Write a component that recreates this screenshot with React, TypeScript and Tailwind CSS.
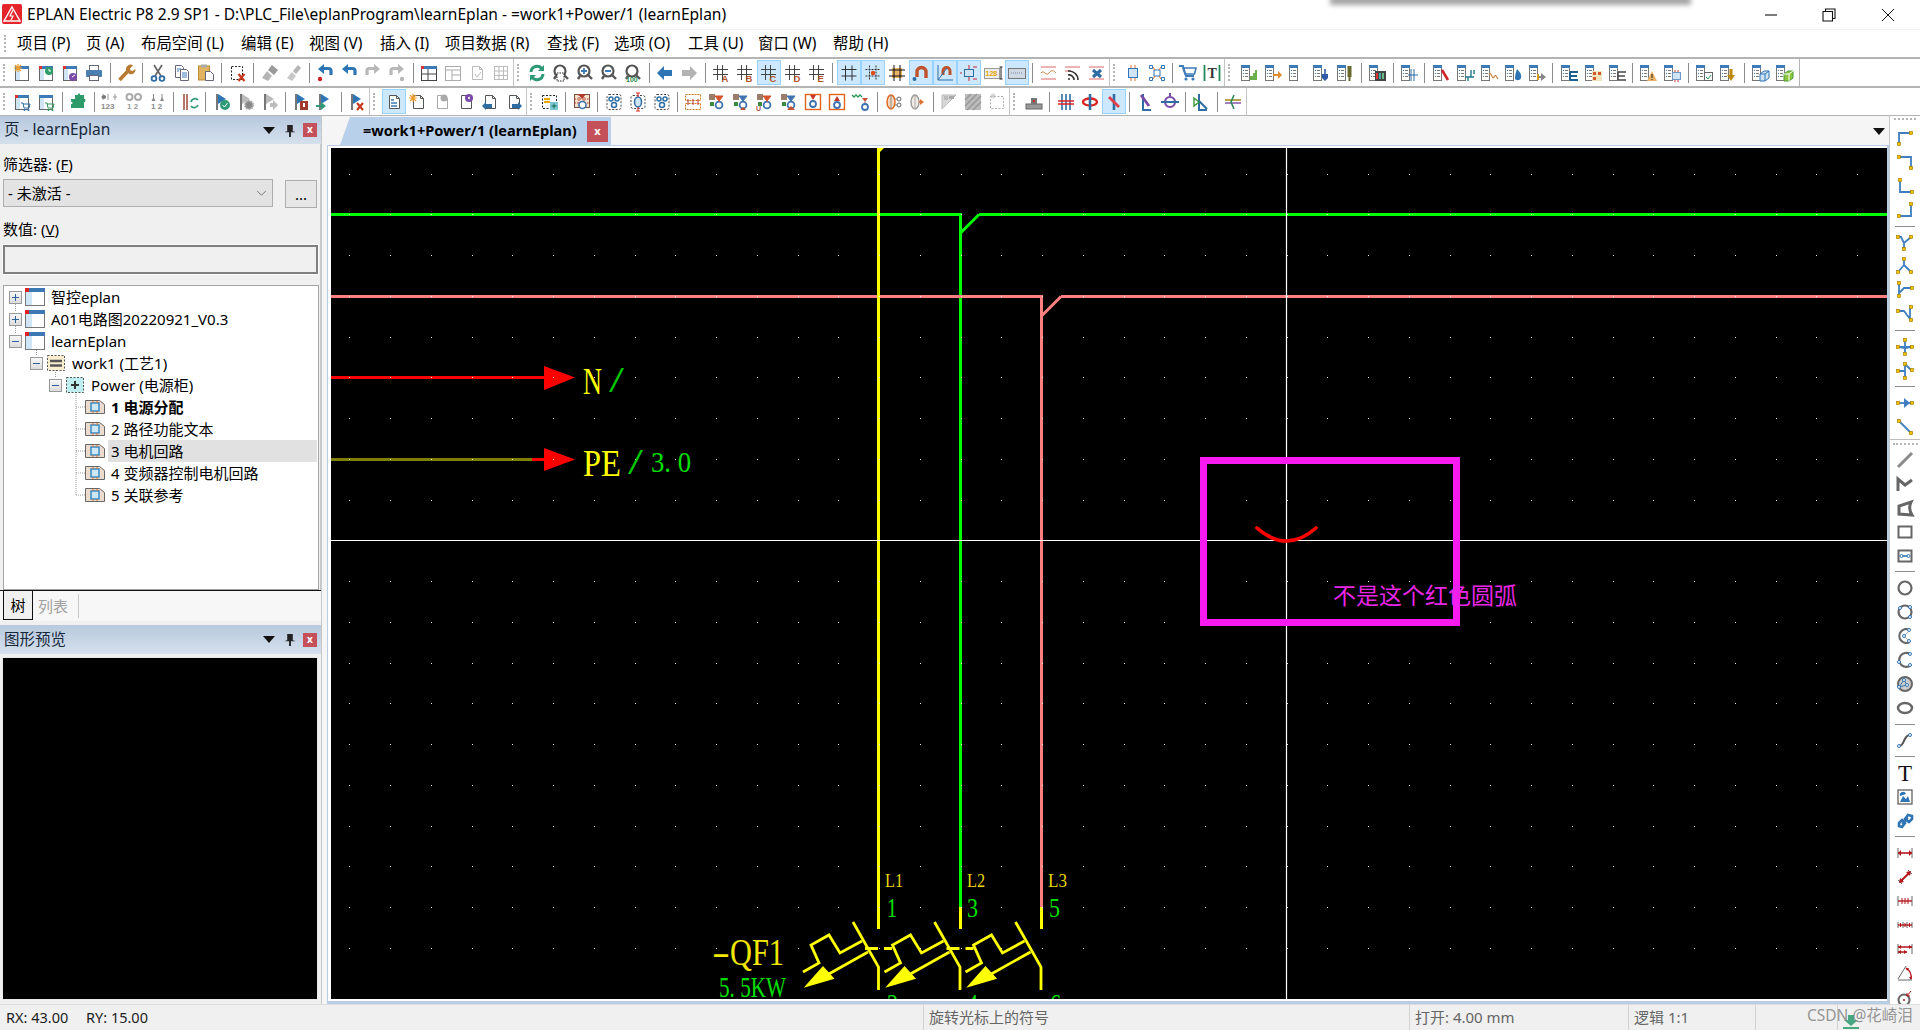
import React from 'react';

const BLUE = '#3d7ab8';
const GR = '#8a8a8a';

const win = (c: string, extra?: React.ReactNode) => (
  <>
    <rect x="3.5" y="4.5" width="13" height="13" fill="#fff" stroke="#666" />
    <rect x="3" y="3" width="14" height="3" fill={BLUE} />
    <rect x="3" y="3" width="3" height="3" fill={c} />
    <rect x="4" y="6" width="4" height="11" fill="#cfe4f5" />
    {extra}
  </>
);
const page = (extra?: React.ReactNode, c = '#666') => (
  <>
    <path d="M5.5 3.5h7l3 3v10h-10z" fill="#fff" stroke={c} />
    <path d="M12.5 3.5v3h3" fill="none" stroke={c} />
    {extra}
  </>
);
const star = (x: number, y: number) => (
  <path d={`M${x} ${y - 4}v8M${x - 4} ${y}h8M${x - 3} ${y - 3}l6 6M${x + 3} ${y - 3}l-6 6`} stroke="#f0a030" strokeWidth="1.2" />
);
const flag = (c: string, extra?: React.ReactNode) => (
  <>
    <path d="M5 2v16" stroke="#777" strokeWidth="2" />
    <path d="M6 2l8 5-8 5z" fill={c} />
    {extra}
  </>
);
const list = (glyph?: React.ReactNode) => (
  <>
    <rect x="2.5" y="2.5" width="8" height="15" fill="#fff" stroke="#777" />
    <rect x="2" y="2" width="9" height="3" fill={BLUE} />
    <path d="M4 7.5h1M4 10.5h1M4 13.5h1" stroke={BLUE} />
    <path d="M6 7.5h3M6 10.5h3M6 13.5h3" stroke="#777" />
    {glyph}
  </>
);
const grid = (letter?: string) => (
  <>
    <path d="M6.5 2v15M11.5 2v15M2 6.5h15M2 11.5h15" stroke="#444" />
    {letter && <text x="10.5" y="18.5" fontSize="9.5" fontWeight="700" fill="#b5532a" fontFamily="Liberation Sans, sans-serif">{letter}</text>}
  </>
);
const undo = (c: string, dot?: string) => (
  <>
    <path d="M16 12V8a2.5 2.5 0 0 0-2.5-2.5H8" stroke={c} strokeWidth="3.2" fill="none" />
    <path d="M9 1v10L3 6z" fill={c} />
    {dot && <circle cx="5" cy="16" r="2.2" fill={dot} />}
  </>
);
const redo = (c: string, dot?: string) => <g transform="translate(20 0) scale(-1 1)">{undo(c, dot)}</g>;
const lens = (extra?: React.ReactNode, c = '#555') => (
  <>
    <circle cx="9" cy="8" r="5.5" fill="#fff" stroke={c} strokeWidth="2.2" />
    <path d="M13 12l4 4M5 13l-2 3" stroke={c} strokeWidth="2.4" />
    {extra}
  </>
);
const sym = (top: string, extra?: React.ReactNode) => (
  <>
    <circle cx="12" cy="13" r="3.4" fill="none" stroke="#3f74b0" strokeWidth="1.8" />
    <path d="M12 10V4M8 4l4 5 4-5z" fill={top} stroke={top} />
    <rect x="2" y="2" width="6" height="6" fill="#9a7d6a" />
    <rect x="3" y="10" width="4" height="4" fill="#3a8a3f" />
    {extra}
  </>
);
const conn = (d: string, ends: number[][]) => (
  <>
    <path d={d} fill="none" stroke="#3f7fc0" strokeWidth="1.8" />
    {ends.map(([x, y]) => <rect key={`${x}-${y}`} x={x - 1.6} y={y - 1.6} width="3.2" height="3.2" fill="#f2c200" stroke="#a07800" strokeWidth="0.6" />)}
  </>
);
const dots = (pts: number[][]) => pts.map(([x, y]) => <circle key={`${x}-${y}`} cx={x} cy={y} r="1.5" fill="#fff" stroke="#2f74b5" strokeWidth="1" />);
const dim = (extra: React.ReactNode) => (
  <>
    <path d="M3 5v10M17 5v10" stroke="#666" />
    {extra}
  </>
);

const icons: Record<string, React.ReactNode> = {
  newProj: win(BLUE, star(6, 5)),
  openProj: win('#d33', <><circle cx="13" cy="8" r="4" fill="#2e9e6b" /><path d="M13 6v2h2" stroke="#fff" fill="none" /></>),
  closeProj: win('#d33', <><circle cx="13" cy="14" r="4" fill="#7a4aa8" /><path d="M12 14l3-2" stroke="#fff" /></>),
  print: <><rect x="5.5" y="2.5" width="9" height="5" fill="#fff" stroke="#667" /><rect x="2" y="7" width="16" height="7" rx="1" fill="#4a7fb0" /><rect x="5.5" y="12.5" width="9" height="5" fill="#fff" stroke="#667" /></>,
  wrench: <><path d="M3.5 17L12 8" stroke="#b87a30" strokeWidth="3.6" /><path d="M10 7a4.5 4.5 0 0 1 7-4.5l-3 3 .5 2 2 .5 3-2a4.5 4.5 0 0 1-6 5z" fill="#b87a30" /></>,
  cut: <><path d="M6 2l7 11M14 2L7 13" stroke="#666" strokeWidth="1.7" /><circle cx="6" cy="15.5" r="2.4" fill="none" stroke="#2e6da4" strokeWidth="1.8" /><circle cx="14" cy="15.5" r="2.4" fill="none" stroke="#2e6da4" strokeWidth="1.8" /></>,
  copy: <><path d="M3.5 2.5h6l2 2v10h-8z" fill="#fff" stroke="#667" /><path d="M8.5 6.5h6l2 2v9h-8z" fill="#fff" stroke="#667" /><path d="M5 6h4M5 8h2M10 10h5M10 12h5M10 14h5" stroke={BLUE} /></>,
  paste: <><rect x="2.5" y="3" width="11" height="14" fill="#e3b45f" stroke="#b98a3a" /><rect x="5" y="1.5" width="6" height="3" fill="#aaa" /><path d="M9.5 8.5h5l3 3v6h-8z" fill="#fff" stroke="#667" /></>,
  delSel: <><rect x="3.5" y="3.5" width="11" height="13" fill="none" stroke="#222" strokeDasharray="2 1.5" /><path d="M10.5 11l6 7M16.5 11l-6 7" stroke="#c8391f" strokeWidth="2.2" /></>,
  brush1: <><path d="M12 2l6 5-4 5-6-5z" fill="#9a9a9a" /><path d="M7 8l5 5-4 5-6-3z" fill="#b5b5b5" /></>,
  brush2: <><path d="M14 2l3 3-5 6-3-3z" fill="#b5b5b5" /><path d="M8 9l4 4-4 5-5-3z" fill="#c8c8c8" /></>,
  undoDot: undo('#2e75b6', '#c22'),
  undo: undo('#2e75b6'),
  redo: redo('#b8b8b8'),
  redoDot: redo('#b8b8b8', '#b8b8b8'),
  panes: <><rect x="2.5" y="3.5" width="15" height="14" fill="#fff" stroke="#444" /><rect x="2" y="3" width="16" height="3" fill={BLUE} /><rect x="2" y="3" width="3" height="3" fill="#d33" /><path d="M2 11h15M9 6v12" stroke="#444" /></>,
  panes2: <><rect x="2.5" y="3.5" width="15" height="14" fill="#fff" stroke="#aaa" /><path d="M2 7h15M9 7v11M9 12h8" stroke="#aaa" /></>,
  docChk: page(<path d="M8 11l2 3 4-5" stroke="#bbb" fill="none" />, '#bbb'),
  table: <><rect x="3.5" y="3.5" width="13" height="13" fill="#fff" stroke="#bbb" /><path d="M8 3.5v13M12.5 3.5v13M3.5 8h13M3.5 12.5h13" stroke="#bbb" /></>,

  refresh: <><path d="M4 9a6 6 0 0 1 11-3" stroke="#2e9a75" strokeWidth="3" fill="none" /><path d="M16 11a6 6 0 0 1-11 3" stroke="#2e9a75" strokeWidth="3" fill="none" /><path d="M17 2v6h-6zM3 18v-6h6z" fill="#2e9a75" /></>,
  zoomWin: lens(<rect x="6" y="10" width="7" height="8" fill="#fff" stroke="#222" strokeDasharray="1.5 1" />),
  zoomIn: lens(<path d="M6 8h6M9 5v6" stroke={BLUE} strokeWidth="1.8" />),
  zoomOut: lens(<path d="M6 8h6" stroke={BLUE} strokeWidth="2" />),
  zoom100: lens(<text x="3" y="19" fontSize="7" fontWeight="700" fill="#2a8f4a" fontFamily="Liberation Sans, sans-serif">100</text>),
  back: <path d="M2 10l7-7v4h8v6H9v4z" fill="#2e75b6" />,
  fwd: <path d="M18 10l-7-7v4H3v6h8v4z" fill="#b3b3b3" />,
  gA: grid('A'), gB: grid('B'), gC: grid('C'), gD: grid('D'), gE: grid('E'),
  g: <path d="M6.5 2.5v15M13 2.5v15M2.5 6.5h15M2.5 13h15" stroke="#333" />,
  gPt: <><path d="M6.5 2.5v15M13 2.5v15M2.5 6.5h15M2.5 13h15" stroke="#333" strokeDasharray="2 1" /><circle cx="10" cy="10" r="2.2" fill="#e04b12" /></>,
  box: <><rect x="5" y="5" width="10" height="10" fill="#eab366" /><path d="M7 2v16M13 2v16M2 7h16M2 13h16" stroke="#111" /></>,
  mag1: <><path d="M6 14V9a4.5 4.5 0 0 1 9 0v6" fill="none" stroke="#c0522a" strokeWidth="3.4" /><circle cx="3.5" cy="16" r="2" fill="#2e6da4" /></>,
  mag2: <><path d="M8 12V8a3.5 3.5 0 0 1 7 0v4" fill="none" stroke="#c0522a" strokeWidth="3" /><path d="M3 2v15h15M3 17l9-12" stroke="#2e6da4" fill="none" /></>,
  snap: <><rect x="5.5" y="6.5" width="9" height="7" fill="#cfe4f5" stroke="#2e6da4" /><path d="M10 2v4M10 14v4M14 4h4M14 16h4M3 10H1" stroke="#c23" fill="none" /></>,
  num: <><rect x="1.5" y="5.5" width="15" height="10" fill="#eee" stroke="#999" /><text x="2.5" y="13" fontSize="7" fontWeight="700" fill="#e3a400" fontFamily="Liberation Sans, sans-serif">128</text><path d="M18 4v12M16.5 4h3M16.5 16h3" stroke="#222" /></>,
  ruler: <><rect x="1.5" y="5.5" width="17" height="10" fill="#cfd9e6" stroke="#777" /><path d="M4 10h12" stroke="#789" strokeDasharray="1 1" /></>,
  lines1: <><path d="M2 4h15M2 16h15" stroke="#d66" /><path d="M2 10c3-4 5 4 8 0s5-2 7 0" stroke="#c98a4a" fill="none" /></>,
  lines2: <><path d="M2 4h15M2 8h6" stroke="#d66" /><path d="M5 16h2M5 12a5 5 0 0 1 6 5M5 8a9 9 0 0 1 10 9" stroke="#333" strokeWidth="1.6" fill="none" /></>,
  lines3: <><path d="M2 4h15M2 16h15" stroke="#d66" /><path d="M6 7l8 7M14 7l-8 7" stroke="#2e6da4" strokeWidth="3" /></>,
  chip: <><rect x="5.5" y="5.5" width="9" height="9" fill="#cfe4f5" stroke="#2e75b6" /><path d="M8 2v3M12 2v3M8 15v3M12 15v3" stroke="#e07030" /></>,
  net: <><rect x="7" y="7" width="6" height="6" fill="#fff" stroke="#2e75b6" /><path d="M4 4h2l2 3M16 4h-2l-2 3M4 16h2l2-3M16 16h-2l-2-3" stroke="#e07030" fill="none" /><path d="M2.5 2.5h3v3h-3zM14.5 2.5h3v3h-3zM2.5 14.5h3v3h-3zM14.5 14.5h3v3h-3z" fill="#fff" stroke="#2e75b6" /></>,
  cart: <><path d="M1 3h4l3 10h8" fill="none" stroke={BLUE} strokeWidth="1.8" /><path d="M5 5h13l-1.5 6H7z" fill="none" stroke={BLUE} strokeWidth="1.6" /><circle cx="8" cy="16" r="1.6" fill={BLUE} /><circle cx="15" cy="16" r="1.6" fill={BLUE} /></>,
  tBar: <><path d="M2.5 2v16M17.5 2v16" stroke="#1f8a5a" strokeWidth="1.8" /><text x="5.5" y="15" fontSize="14" fontWeight="700" fill="#333" fontFamily="Liberation Serif, serif">T</text></>,

  l1: list(<path d="M11 17v-4h3v-3h2v-3h2v10z" fill="#6ab04c" />),
  l2: list(<path d="M10 11h5V8l4 4-4 4v-3h-5z" fill="#e08a2e" />),
  l3: list(),
  l4: list(<><path d="M14 6v5" stroke="#2e5aa8" strokeWidth="1.6" /><path d="M11 11h6v4l-3 3-3-3z" fill="#2e5aa8" /></>),
  l5: list(<><rect x="12.5" y="3" width="4" height="11" fill="#6a6a2e" /><path d="M14.5 14v4" stroke="#6a6a2e" strokeWidth="2" /></>),
  l6: list(<><rect x="8" y="8" width="11" height="10" fill="#444" /><path d="M10 10v6" stroke="#d33" strokeWidth="2" /><path d="M13 10v6" stroke="#4aa" strokeWidth="2" /><path d="M16 10v6" stroke="#6b8" strokeWidth="2" /></>),
  l7: list(<path d="M12 6v12M15 6v12M9 12h10" stroke="#2e6da4" />),
  l8: list(<path d="M11 7l6 10" stroke="#d3232a" strokeWidth="2.6" />),
  l9: list(<path d="M10 14h9M13 14v4M16 7v7M19 7v4" stroke="#1f7a8a" strokeWidth="1.4" fill="none" />),
  l10: list(<path d="M10 12c2-6 3 6 5 2s2 0 4 2" stroke="#c98a4a" fill="none" strokeWidth="1.2" />),
  l11: list(<path d="M14 6c3 3 5 6 4 9s-6 3-6 0 1-6 2-9z" fill="#2e75b6" />),
  l12: list(<><path d="M10 14h6" stroke="#888" strokeWidth="2" /><path d="M14 10l5 4-5 4z" fill="#888" /><rect x="10" y="11" width="2" height="6" fill="#d4a017" /></>),
  l13: list(<path d="M11 9h8M11 9v8M11 13h7M11 17h8" stroke="#1f5f8f" strokeWidth="2" fill="none" />),
  l14: list(<><rect x="9" y="8" width="10" height="10" fill="#efe6c0" /><rect x="10" y="9" width="3" height="3" fill="#d2572a" /><rect x="15" y="9" width="3" height="3" fill="#d2572a" /><rect x="10" y="14" width="3" height="3" fill="#d2572a" /></>),
  l15: list(<path d="M11 9h8M11 9v8M11 13h7M11 17h8" stroke="#444" strokeWidth="1.4" fill="none" />),
  l16: list(<><path d="M14 8l5 10H9z" fill="#eab366" /><path d="M14 11v4M14 16v1" stroke="#222" /></>),
  l17: list(<><rect x="10.5" y="9.5" width="8" height="7" fill="#cfe4f5" stroke="#6f97c5" /><path d="M13 7v2M16 7v2M13 17v2M16 17v2" stroke="#c33" /></>),
  l18: list(<><rect x="10.5" y="9.5" width="8" height="8" fill="#fff" stroke="#666" /><path d="M12 14l2 2 3-4" stroke="#2a9a5a" fill="none" /></>),
  l19: list(<><path d="M13 6v7" stroke="#c08a10" strokeWidth="3" /><path d="M9 12h8l-4 6z" fill="#c08a10" /></>),
  l20: list(<><path d="M10 11l4-3h5v7l-4 3h-5z" fill="#cfe4f5" stroke="#2e75b6" /><path d="M10 11h5v7M15 11l4-3" stroke="#2e75b6" fill="none" /></>),
  l21: list(<><path d="M10 11l4-3h5v7l-4 3h-5z" fill="#8cc63f" stroke="#4a9a3a" /><path d="M10 11h5v7M15 11l4-3" stroke="#fff" fill="none" /></>),

  cartB: win('#d33', <><path d="M9 11h2l1 5h5l1-4h-7" stroke="#2e6da4" fill="none" /><circle cx="12.5" cy="18" r="1" fill="#2e6da4" /><circle cx="16.5" cy="18" r="1" fill="#2e6da4" /></>),
  cartG: win(BLUE, <><path d="M9 11h2l1 5h5l1-4h-7" stroke="#2a9a5a" fill="none" /><circle cx="12.5" cy="18" r="1" fill="#2a9a5a" /><circle cx="16.5" cy="18" r="1" fill="#2a9a5a" /></>),
  puzzle: <path d="M7 3h3c-1-2 3-2 2 0h4v4c2-1 2 4 0 3v6H3v-4c2 1 2-3 0-2V7h4z" fill="#2f9a6a" />,
  t123: <><path d="M3 2v6M8 2v6M15 2v6M1 5h4M13 5h4" stroke="#999" /><circle cx="4" cy="5" r="2" fill="#777" /><text x="1" y="17" fontSize="8" fontWeight="700" fill="#888" fontFamily="Liberation Sans, sans-serif">123</text></>,
  t12a: <><circle cx="5.5" cy="5" r="3" fill="none" stroke="#aaa" strokeWidth="2" /><circle cx="14" cy="5" r="3" fill="none" stroke="#aaa" strokeWidth="2" /><text x="3" y="17" fontSize="8" fontWeight="700" fill="#999" fontFamily="Liberation Sans, sans-serif">1 2</text></>,
  t12b: <><path d="M5.5 2v4M14 2v4" stroke="#888" /><path d="M3.5 9l2-4 2 4zM12 9l2-4 2 4z" fill="#888" /><text x="3" y="17" fontSize="8" fontWeight="700" fill="#888" fontFamily="Liberation Sans, sans-serif">1 2</text></>,
  barRef: <><path d="M4 2v16M7 2v16" stroke="#a4574a" strokeWidth="1.6" /><path d="M11 10a4 4 0 0 1 7-2M18 13a4 4 0 0 1-7 1" stroke="#2e9a75" strokeWidth="1.8" fill="none" /></>,
  flagChk: flag('#2e75b6', <><circle cx="13" cy="13" r="5" fill="#2e9a75" /><path d="M10.5 13l2 2 3-4" stroke="#fff" fill="none" /></>),
  flagGear: flag('#bbb', <circle cx="13" cy="13" r="4" fill="#888" stroke="#aaa" strokeDasharray="1.5 1" strokeWidth="2" />),
  flagArr: flag('#bbb', <path d="M10 11v4h3v3l5-5-5-5v3z" fill="#bbb" />),
  flagDoc: flag('#2e75b6', <><rect x="9" y="9" width="8" height="9" fill="#a33a2e" /><rect x="12" y="11" width="2" height="4" fill="#fff" /></>),
  flagGrn: flag('#2e75b6', <path d="M1 13h5v-3l5 4-5 4v-3H1z" fill="#2e9a75" />),
  flagX: flag('#2e75b6', <path d="M10 11l6 7M16 11l-6 7" stroke="#c8391f" strokeWidth="2.2" />),
  docList: page(<path d="M7 8h3M7 11h6M7 14h6" stroke={BLUE} strokeWidth="1.5" />, '#555'),
  docStar: <>{page(undefined, '#555')}{star(5, 6)}</>,
  docCirc: page(<circle cx="12" cy="6" r="3.5" fill="#aaa" />, '#aaa'),
  docPur: page(<><circle cx="13" cy="6" r="4" fill="#7a4aa8" /><path d="M14 5l-2 1 2 1" stroke="#fff" fill="none" /></>, '#555'),
  docL: page(<path d="M2 14l4-4v2h6v4H6v2z" fill="#2e6da4" />, '#555'),
  docR: page(<path d="M18 14l-4-4v2H8v4h6v2z" fill="#2e6da4" />, '#555'),
  dashPlus: <><rect x="2.5" y="3.5" width="14" height="13" fill="none" stroke="#222" strokeDasharray="2 1.5" /><rect x="4" y="6" width="6" height="2" fill="#e6a800" /><rect x="4" y="9" width="6" height="2" fill="#e6a800" /><rect x="10" y="10" width="8" height="8" fill="#7cc7d4" /><path d="M14 11.5v5M11.5 14h5" stroke="#164" /></>,
  gridC: <><rect x="2.5" y="2.5" width="15" height="13" fill="#f4e2cf" stroke="#7a4a3a" /><path d="M7 2.5v13M12 2.5v13M2.5 7h15M2.5 11h15" stroke="#b03a2e" strokeDasharray="1.5 1" /><path d="M6 2l4 5 4-5z" fill="#b03a2e" /><circle cx="10.5" cy="13" r="3.5" fill="#fff" stroke="#3f74b0" strokeWidth="1.6" /></>,
  dashB: <><rect x="3" y="2.5" width="14" height="15" rx="2" fill="none" stroke="#444" strokeDasharray="2 1.5" /><circle cx="7" cy="7" r="2" fill="none" stroke="#2e6da4" strokeWidth="1.5" /><circle cx="13" cy="7" r="2" fill="none" stroke="#2e6da4" strokeWidth="1.5" /><circle cx="10" cy="13" r="2.5" fill="none" stroke="#2e6da4" strokeWidth="1.5" /></>,
  dashR: <><rect x="3" y="3.5" width="14" height="13" rx="2" fill="none" stroke="#444" strokeDasharray="2 1.5" /><ellipse cx="10" cy="10" rx="3.5" ry="5" fill="#cfe4f5" stroke="#2e6da4" strokeWidth="1.5" /><path d="M10 1v4M10 15v4M8 1h4M8 19h4" stroke="#d22" /></>,
  dashO: <><rect x="2.5" y="2.5" width="15" height="6" fill="none" stroke="#c8791a" strokeDasharray="2 1" /><rect x="2.5" y="11.5" width="15" height="6" fill="none" stroke="#c8791a" strokeDasharray="2 1" /><path d="M5 7v6M10 7v6M15 7v6" stroke="#b33" /></>,
  s1: sym('#d9502c'), s2: sym('#3f74b0', <path d="M9 18l3-3 3 3z" fill="#c8502c" />),
  s3: sym('#d9502c', <text x="1" y="19" fontSize="7" fontWeight="700" fill="#a4574a" fontFamily="Liberation Sans, sans-serif">U</text>),
  s4: sym('#3f74b0', <path d="M8 18l4-4 4 4z" fill="#c8502c" />),
  o1: <><rect x="2.5" y="2.5" width="15" height="15" fill="#fff" stroke="#e0631a" strokeWidth="1.4" /><path d="M7 3l3 5 3-5z" fill="#c8392b" /><circle cx="10" cy="12" r="3" fill="none" stroke="#3f74b0" strokeWidth="1.8" /></>,
  o2: <><rect x="2.5" y="2.5" width="15" height="15" fill="#fff" stroke="#e0631a" strokeWidth="1.4" /><path d="M7 9l3-5 3 5z" fill="#c8392b" /><circle cx="10" cy="13" r="3" fill="none" stroke="#3f74b0" strokeWidth="1.8" /></>,
  greenT: <><path d="M1 3l2 2 2-2 2 2 2-2 2 2" stroke="#2a9a5a" fill="none" strokeWidth="1.4" /><path d="M11 6h6l-3 4z" fill="#c8502c" /><path d="M14 10v2" stroke="#555" /><circle cx="14" cy="15" r="3" fill="none" stroke="#3f74b0" strokeWidth="1.8" /></>,
  caps: <><ellipse cx="8" cy="10" rx="4" ry="7" fill="#f5d7c0" stroke="#e0631a" strokeWidth="1.4" /><path d="M8 3v14" stroke="#888" /><path d="M12 7h3M12 13h3" stroke="#888" /><circle cx="16" cy="7" r="2" fill="#fff" stroke="#666" /><circle cx="16" cy="13" r="2" fill="#fff" stroke="#666" /></>,
  capsG: <><ellipse cx="8" cy="10" rx="4" ry="7" fill="#f3ece6" stroke="#999" strokeWidth="1.4" /><path d="M8 3v14" stroke="#aaa" /><path d="M12 10h3" stroke="#e07030" strokeWidth="1.6" /><path d="M13 7l4 3-4 3z" fill="#e07030" /></>,
  cube1: <><path d="M3 3h14L3 17z" fill="#d8d8d8" stroke="#bbb" /><rect x="10" y="4" width="5" height="3" fill="#aaa" /><rect x="5" y="4" width="4" height="4" fill="#bbb" /></>,
  hatch: <><rect x="2" y="2" width="16" height="16" fill="#bbb" /><path d="M2 8l6-6M2 14L14 2M4 18L18 4M10 18l8-8" stroke="#999" strokeWidth="1.5" /></>,
  dashS: <><rect x="3.5" y="4.5" width="13" height="12" fill="none" stroke="#aaa" strokeDasharray="2 1.5" /><path d="M6 1v6M3 4h6M4 2l4 4M8 2L4 6" stroke="#ccc" /></>,
  stamp: <><rect x="2" y="12" width="16" height="5" fill="#999" stroke="#666" /><rect x="7" y="6" width="6" height="6" fill="#777" /><circle cx="10" cy="9" r="1.2" fill="#c33" /></>,
  bus: <><path d="M6 2v16M10 2v16M14 2v16" stroke="#2e6da4" strokeWidth="1.6" /><path d="M2 9h16M2 12h16" stroke="#d22" strokeWidth="1.6" /></>,
  loop: <><ellipse cx="10" cy="10" rx="7" ry="3.5" fill="none" stroke="#d22" strokeWidth="2.4" /><path d="M10 2v16" stroke="#2e6da4" strokeWidth="2.6" /></>,
  slash: <><path d="M10 2v16" stroke="#2e6da4" strokeWidth="2.6" /><path d="M5 5l10 10" stroke="#e0404a" strokeWidth="2.8" /></>,
  bendP: <><path d="M7 2v16h8" stroke="#2e6da4" strokeWidth="2" fill="none" /><path d="M5 3l8 11" stroke="#7a4aa8" strokeWidth="2.8" /></>,
  ringP: <><circle cx="10" cy="10" r="5" fill="none" stroke="#7a4aa8" strokeWidth="2.2" /><path d="M1 10h18" stroke="#2e6da4" strokeWidth="2" /><path d="M10 1v3" stroke="#7a4aa8" strokeWidth="2" /></>,
  angG: <><path d="M8 2v16h8M8 9l8 8" stroke="#2e6da4" strokeWidth="2" fill="none" /><path d="M3 6l5 4-5 4z" fill="none" stroke="#3a9a3a" strokeWidth="1.4" /></>,
  multi: <><path d="M2 8h16" stroke="#a89020" strokeWidth="1.6" /><path d="M2 11h16" stroke="#7a4aa8" strokeWidth="1.4" /><path d="M11 3l-3 7 3 7" stroke="#2e8a5a" strokeWidth="1.6" fill="none" /></>,

  r1: conn('M4 16V5H16', [[4, 16], [16, 5]]),
  r2: conn('M4 5H16V16', [[4, 5], [16, 16]]),
  r3: conn('M5 4V16H17', [[5, 4], [17, 16]]),
  r4: conn('M16 4V16H4', [[16, 4], [4, 16]]),
  r5: conn('M3 5H6L9 11L16 5M9 11V17', [[3, 5], [16, 5], [9, 17]]),
  r6: conn('M9 3V9L3 16M9 9L16 16', [[9, 3], [3, 16], [16, 16]]),
  r7: conn('M4 3V15M4 13L9 8H17', [[4, 3], [4, 16], [17, 8]]),
  r8: conn('M3 7H9L15 15M15 3V15', [[3, 7], [16, 3], [16, 16]]),
  r9: conn('M10 3V11M3 10H16M10 11L4 10M10 11L16 10M10 11V17', [[10, 3], [3, 10], [17, 10], [10, 17]]),
  r10: conn('M10 3V10L3 10M10 3L16 9M10 10V17', [[10, 3], [3, 10], [17, 9], [10, 17]]),
  r11: <>{conn('M3 10H17', [[3, 10], [17, 10]])}<path d="M9 5l6 5-6 5z" fill="#3f7fc0" /></>,
  r12: <>{conn('M3 3L17 17', [[4, 4], [16, 16]])}</>,
  d1: <path d="M3 17L17 3" stroke={GR} strokeWidth="3" />,
  d2: <path d="M3 17V5l7 6 7-5" stroke="#666" strokeWidth="3" fill="none" />,
  d3: <path d="M4 16V8l12-4c-2 4-2 8 1 13z" stroke="#666" strokeWidth="3" fill="none" />,
  d4: <rect x="3.5" y="4.5" width="13" height="11" fill="none" stroke="#666" strokeWidth="2" />,
  d5: <><rect x="3.5" y="4.5" width="13" height="11" fill="none" stroke="#666" strokeWidth="2" /><path d="M6 10h8" stroke="#2f74b5" strokeWidth="1.6" />{dots([[6.5, 10], [13.5, 10]])}</>,
  c1: <circle cx="10" cy="10" r="6.5" fill="none" stroke="#666" strokeWidth="2.2" />,
  c2: <><circle cx="10" cy="10" r="6.5" fill="none" stroke="#666" strokeWidth="2.2" />{dots([[5, 6], [15, 5], [15, 15]])}</>,
  c3: <><path d="M15 4A7 7 0 1 0 15 16" fill="none" stroke="#666" strokeWidth="2.2" /><path d="M15 4l-6 6 6 6" fill="none" stroke="#aaa" />{dots([[14, 4], [9, 10], [14, 15]])}</>,
  c4: <><path d="M15 4A7 7 0 1 0 16 15" fill="none" stroke="#666" strokeWidth="2.2" />{dots([[15, 4], [4, 12], [15, 15]])}</>,
  c5: <><circle cx="10" cy="10" r="7" fill="#ccc" stroke="#666" strokeWidth="2" /><path d="M4 13l5-7 3 5z" fill="none" stroke="#2f74b5" />{dots([[4, 13], [9, 6], [12, 11]])}</>,
  c6: <ellipse cx="10" cy="10" rx="7" ry="5" fill="none" stroke="#666" strokeWidth="2.4" />,
  spl: <><path d="M4 16c6 0 4-11 11-11" fill="none" stroke="#555" strokeWidth="2" />{dots([[4, 16], [15, 5]])}</>,
  txt: <text x="10" y="18" textAnchor="middle" fontSize="23" fontFamily="Liberation Serif, serif" fill="#111">T</text>,
  pic: <><rect x="3" y="3" width="14" height="14" fill="#fff" stroke="#555" strokeWidth="1.2" /><path d="M5 15l3-6 3 3 2-3 2 6z" fill="#2f74b5" /><path d="M5 9a3 3 0 0 1 6-2z" fill="#2f74b5" /></>,
  link: <><path d="M4 12l3-3 3 3-3 4-3-1zM10 8l3-4 4 1 0 3-3 3z" fill="none" stroke="#2f74b5" strokeWidth="2.6" /><path d="M7 13l6-6" stroke="#2f74b5" strokeWidth="2" /></>,
  m1: dim(<><path d="M3 10h14" stroke="#b3151b" strokeWidth="1.6" /><path d="M3 10l3-3v6zM17 10l-3-3v6z" fill="#b3151b" /></>),
  m2: <><path d="M5 15L15 5" stroke="#b3151b" strokeWidth="2" /><path d="M3 13l4 4M13 3l4 4" stroke="#666" /><path d="M4 16l1-5 4 4zM16 4l-1 5-4-4z" fill="#b3151b" /></>,
  m3: dim(<><path d="M3 10h14" stroke="#b3151b" strokeWidth="1.4" /><path d="M7 7v6M10 7v6M13 7v6" stroke="#b3151b" /></>),
  m4: <><path d="M3 7v6M8 7v6M12 7v6M17 7v6" stroke="#666" /><path d="M3 10h14" stroke="#b3151b" strokeWidth="1.4" /><path d="M5.5 8v4M10 8v4M14.5 8v4" stroke="#b3151b" /></>,
  m5: dim(<><path d="M3 8h14M3 13h9" stroke="#b3151b" strokeWidth="1.4" /><path d="M3 8l3-2v4zM17 8l-3-2v4zM3 13l3-2v4zM12 13l-3-2v4z" fill="#b3151b" /></>),
  m6: <><path d="M3 16L11 3M3 17h14" stroke="#666" /><path d="M11 5a11 11 0 0 1 5 11" stroke="#b3151b" fill="none" strokeWidth="1.4" /><path d="M11 5l3 0-2 3zM16 17l-2-3 3 0z" fill="#b3151b" /></>,
  m7: <><circle cx="9" cy="13" r="5.5" fill="none" stroke="#666" strokeWidth="2" /><circle cx="9" cy="13" r="1" fill="#b3151b" /><path d="M16 4l-4 5M12 6v3h3" stroke="#b3151b" fill="none" /></>,
};

const Sep = () => <div className="w-[7.8px] h-full shrink-0 flex justify-center items-center"><div className="w-[1px] h-[20px] bg-[#8c8c8c]" /></div>;

const Btn = ({ name }: { name: string }) => {
  const on = name.startsWith('*');
  const key = on ? name.slice(1) : name;
  return (
    <div className={`w-[24px] h-[25px] shrink-0 flex items-center justify-center ${on ? 'bg-[#cce8ff] border border-[#99d1ff]' : ''}`}>
      <svg viewBox="0 0 20 20" className="w-[20px] h-[20px] shrink-0">{icons[key]}</svg>
    </div>
  );
};

const HGrip = ({ cls }: { cls: string }) => (
  <div className={`absolute top-[5px] bottom-[5px] w-[1px] border-l-2 border-dotted border-[#b5b5b5] ${cls}`} />
);

const Group = ({ pad, last, items }: { pad: string; last?: boolean; items: string[] }) => (
  <div className={`relative flex items-center h-full ${pad} ${last ? '' : 'border-r border-[#c4c4c4]'}`}>
    <HGrip cls="left-[3px]" />
    {items.map((it, i) => (it === '|' ? <Sep key={i} /> : <Btn key={i} name={it} />))}
  </div>
);

const row1 = [
  { pad: 'pl-[10.4px]', items: ['newProj', 'openProj', 'closeProj', 'print', '|', 'wrench', '|', 'cut', 'copy', 'paste', '|', 'delSel', '|', 'brush1', 'brush2', '|', 'undoDot', 'undo', 'redo', 'redoDot', '|', 'panes', 'panes2', 'docChk', 'table'] },
  { pad: 'pl-[11.3px]', items: ['refresh', 'zoomWin', 'zoomIn', 'zoomOut', 'zoom100', '|', 'back', 'fwd', '|', 'gA', 'gB', '*gC', 'gD', 'gE', '|', '*g', '*gPt', 'box', '*mag1', '*mag2', '*snap', 'num', '*ruler', '|', 'lines1', 'lines2', 'lines3'] },
  { pad: 'pl-[11px]', items: ['chip', 'net', '|', 'cart', 'tBar'] },
  { pad: 'pl-[12px]', last: true, items: ['l1', 'l2', 'l3', 'l4', 'l5', '|', 'l6', '|', 'l7', '|', 'l8', 'l9', 'l10', 'l11', 'l12', '|', 'l13', 'l14', 'l15', '|', 'l16', 'l17', '|', 'l18', 'l19', '|', 'l20', 'l21'] },
];

const row2 = [
  { pad: 'pl-[10.4px]', items: ['cartB', 'cartG', '|', 'puzzle', '|', 't123', 't12a', 't12b', '|', 'barRef', '|', 'flagChk', 'flagGear', 'flagArr', '|', 'flagDoc', 'flagGrn', '|', 'flagX'] },
  { pad: 'pl-[11.8px]', items: ['*docList', 'docStar', 'docCirc', 'docPur', 'docL', 'docR'] },
  { pad: 'pl-[11px]', items: ['dashPlus', '|', 'gridC', '|', 'dashB', 'dashR', 'dashB', '|', 'dashO', 's1', 's2', 's3', 's4', 'o1', 'o2', 'greenT', '|', 'caps', 'capsG', '|', 'cube1', 'hatch', 'dashS'] },
  { pad: 'pl-[12px]', last: true, items: ['stamp', '|', 'bus', 'loop', '*slash', '|', 'bendP', 'ringP', '|', 'angG', '|', 'multi'] },
];

const side = ['r1', 'r2', 'r3', 'r4', '|', 'r5', 'r6', 'r7', 'r8', '|', 'r9', 'r10', '|', 'r11', 'r12', '=', 'd1', 'd2', 'd3', 'd4', 'd5', '|', 'c1', 'c2', 'c3', 'c4', 'c5', 'c6', '|', 'spl', '|', 'txt', 'pic', 'link', '|', 'm1', 'm2', 'm3', 'm4', 'm5', 'm6', 'm7'];

const menus: [string, string][] = [
  ['项目 (P)', 'w-[69px]'], ['页 (A)', 'w-[55px]'], ['布局空间 (L)', 'w-[100px]'], ['编辑 (E)', 'w-[68px]'],
  ['视图 (V)', 'w-[71px]'], ['插入 (I)', 'w-[65px]'], ['项目数据 (R)', 'w-[102px]'], ['查找 (F)', 'w-[67px]'],
  ['选项 (O)', 'w-[74px]'], ['工具 (U)', 'w-[70px]'], ['窗口 (W)', 'w-[75px]'], ['帮助 (H)', 'w-[70px]'],
];

const PanelHeader = ({ title, h }: { title: string; h: string }) => (
  <div className={`${h} shrink-0 flex items-center pl-[4px] bg-gradient-to-b from-[#b7c9de] to-[#d5e0ec] text-[15.5px] text-[#16273a]`}>
    <span className="flex-1">{title}</span>
    <svg viewBox="0 0 14 8" className="w-[12px] h-[7px] mr-[10px]"><path d="M0 0h14L7 8z" fill="#111" /></svg>
    <svg viewBox="0 0 10 14" className="w-[10px] h-[13px] mr-[8px]"><path d="M2 1h6v7h2v1H6v5H4V9H0V8h2z" fill="#222" /></svg>
    <div className="w-[14px] h-[14px] mr-[4px] bg-[#c4515a] text-white text-[10px] font-bold leading-[13px] text-center">x</div>
  </div>
);

const TreeIcon = ({ kind }: { kind: string }) => {
  if (kind === 'proj') return (
    <svg viewBox="0 0 20 20" className="w-[20px] h-[20px] shrink-0">
      <rect x="0.5" y="2.5" width="19" height="16" fill="#fff" stroke="#777" />
      <rect x="0" y="1" width="20" height="4" fill="#3d78b5" />
      <rect x="0" y="1" width="4" height="4" fill="#d22" />
      <rect x="1" y="5" width="6" height="13" fill="#cfe6f7" />
    </svg>
  );
  if (kind === 'work') return (
    <svg viewBox="0 0 20 20" className="w-[20px] h-[20px] shrink-0">
      <rect x="1.5" y="2.5" width="17" height="15" fill="#fbeecf" stroke="#555" strokeDasharray="2 1.5" />
      <path d="M4 8h12M4 12.5h12" stroke="#555" strokeWidth="2.6" />
    </svg>
  );
  if (kind === 'pow') return (
    <svg viewBox="0 0 20 20" className="w-[20px] h-[20px] shrink-0">
      <rect x="1.5" y="2.5" width="17" height="15" fill="#bfeef0" stroke="#555" strokeDasharray="2 1.5" />
      <path d="M10 6v8M6 10h8" stroke="#333" strokeWidth="2" />
    </svg>
  );
  return (
    <svg viewBox="0 0 20 20" className="w-[20px] h-[20px] shrink-0">
      <path d="M.5 3.5h14l5 4v9H.5z" fill="#ecdccd" stroke="#666" />
      <rect x="6" y="6" width="8" height="8" fill="#cfe8f7" stroke="#2e86c1" strokeWidth="1.4" />
      <path d="M8 4v2M12 4v2M8 14v2M12 14v2" stroke="#e07030" />
    </svg>
  );
};

const Exp = ({ open }: { open: boolean }) => (
  <div className="relative w-[13px] h-[13px] shrink-0 border border-[#999] bg-gradient-to-b from-[#f7f7f7] to-[#dcdcdc]">
    <div className="absolute left-[2px] right-[2px] top-[5px] h-[1px] bg-[#2e5f9e]" />
    {!open && <div className="absolute top-[2px] bottom-[2px] left-[5px] w-[1px] bg-[#2e5f9e]" />}
  </div>
);

const tree = [
  { t: '智控eplan', lv: 'pl-[5px]', kind: 'proj', exp: false, gap: 'ml-[3px]' },
  { t: 'A01电路图20220921_V0.3', lv: 'pl-[5px]', kind: 'proj', exp: false, gap: 'ml-[3px]' },
  { t: 'learnEplan', lv: 'pl-[5px]', kind: 'proj', exp: true, gap: 'ml-[3px]' },
  { t: 'work1 (工艺1)', lv: 'pl-[26px]', kind: 'work', exp: true, gap: 'ml-[3px]' },
  { t: 'Power (电源柜)', lv: 'pl-[45px]', kind: 'pow', exp: true, gap: 'ml-[3px]' },
  { t: '1 电源分配', lv: 'pl-[81px]', kind: 'page', bold: true },
  { t: '2 路径功能文本', lv: 'pl-[81px]', kind: 'page' },
  { t: '3 电机回路', lv: 'pl-[81px]', kind: 'page', sel: true },
  { t: '4 变频器控制电机回路', lv: 'pl-[81px]', kind: 'page' },
  { t: '5 关联参考', lv: 'pl-[81px]', kind: 'page' },
];

const X0 = 349.3;
const Y0 = 173.5;
const dotPath = () => {
  let d = '';
  for (let i = 0; i < 38; i++) {
    for (let j = 0; j < 21; j++) {
      d += `M${Math.round(X0 + i * 40.75)} ${Math.round(Y0 - 40.75 + j * 40.75)}h1v1h-1z`;
    }
  }
  return d;
};

const YEL = '#ffff00';
const GRN = '#00e000';

const Breaker = ({ dx, dash }: { dx: number; dash: boolean }) => (
  <g transform={`translate(${dx} 0)`} stroke={YEL} strokeWidth="2.8" fill="none">
    <path d="M853 922L878.5 967V990" />
    <path d="M803 972L819 963L811 945L829 935L840 953L862 941" />
    <path d="M868 952L827 975" />
    <path d="M808 985L823 968L832 978Z" fill={YEL} />
    {dash && <path d="M865 948.5H878M884 948.5H892" />}
  </g>
);

const Schematic = () => (
  <svg viewBox="331 148 1556 851" className="w-[1556px] h-[851px] block bg-black">
    <g fill="none" shapeRendering="crispEdges">
      <path d="M331 214.5H960.5V907" stroke="#00ff00" strokeWidth="3" />
      <path d="M979 214.5H1887" stroke="#00ff00" strokeWidth="3" />
      <path d="M331 296.5H1041.5V907" stroke="#ff8080" strokeWidth="3" />
      <path d="M1061 296.5H1887" stroke="#ff8080" strokeWidth="3" />
      <path d="M878.5 148V929M960.5 907V929M1041.5 907V929" stroke={YEL} strokeWidth="3" />
      <path d="M331 377.5H546" stroke="#ff0000" strokeWidth="3" />
      <path d="M331 459.5H532" stroke="#808000" strokeWidth="3" />
      <path d="M532 459.5H546" stroke="#ff0000" strokeWidth="3" />
    </g>
    <path d="M960.5 233L979 214.5" fill="none" stroke="#00ff00" strokeWidth="3" />
    <path d="M1041.5 316L1061 296.5" fill="none" stroke="#ff8080" strokeWidth="3" />
    <path d="M879 148h5l-5 5z" fill={YEL} />
    <path d="M544 366L575 377.5L544 390ZM544 448L575 459.5L544 471Z" fill="#ff0000" />
    <path d={dotPath()} fill="#e8e8e8" />
    <path d="M331 540.5H1887M1286.5 148V999" stroke="#ffffff" strokeWidth="1.2" />

    <g fontFamily="Liberation Serif, serif">
      <text x="583" y="394" fontSize="38" fill={YEL} textLength={19} lengthAdjust="spacingAndGlyphs">N</text>
      <text x="609" y="392" fontSize="36" fill="#00c800" textLength={15} lengthAdjust="spacingAndGlyphs">/</text>
      <text x="583" y="476" fontSize="38" fill={YEL} textLength={38} lengthAdjust="spacingAndGlyphs">PE</text>
      <text x="628" y="474" fontSize="36" fill="#00c800" textLength={15} lengthAdjust="spacingAndGlyphs">/</text>
      <text x="651" y="472" fontSize="30" fill={GRN} textLength={40} lengthAdjust="spacingAndGlyphs">3. 0</text>
      <text x="885" y="887" fontSize="19" fill="#e8d800" textLength={18} lengthAdjust="spacingAndGlyphs">L1</text>
      <text x="967" y="887" fontSize="19" fill="#e8d800" textLength={18} lengthAdjust="spacingAndGlyphs">L2</text>
      <text x="1048" y="887" fontSize="19" fill="#e8d800" textLength={19} lengthAdjust="spacingAndGlyphs">L3</text>
      <text x="887" y="917" fontSize="28" fill={GRN} textLength={10} lengthAdjust="spacingAndGlyphs">1</text>
      <text x="967" y="917" fontSize="28" fill={GRN} textLength={11} lengthAdjust="spacingAndGlyphs">3</text>
      <text x="1049" y="917" fontSize="28" fill={GRN} textLength={11} lengthAdjust="spacingAndGlyphs">5</text>
      <text x="712" y="965" fontSize="38" fill="#f0e800" textLength={18} lengthAdjust="spacingAndGlyphs">-</text>
      <text x="730" y="965" fontSize="38" fill="#f0e800" textLength={54} lengthAdjust="spacingAndGlyphs">QF1</text>
      <text x="719" y="997" fontSize="29" fill={GRN} textLength={67} lengthAdjust="spacingAndGlyphs">5. 5KW</text>
      <text x="887" y="1013" fontSize="28" fill={GRN} textLength={11} lengthAdjust="spacingAndGlyphs">2</text>
      <text x="967" y="1013" fontSize="28" fill={GRN} textLength={11} lengthAdjust="spacingAndGlyphs">4</text>
      <text x="1050" y="1013" fontSize="28" fill={GRN} textLength={11} lengthAdjust="spacingAndGlyphs">6</text>
    </g>

    <Breaker dx={0} dash />
    <Breaker dx={81.5} dash />
    <Breaker dx={162.5} dash={false} />

    <path d="M1257 528Q1286.5 554 1316 528" fill="none" stroke="#ff0000" strokeWidth="3.6" strokeLinecap="round" />
    <rect x="1203.5" y="460.5" width="253" height="162" fill="none" stroke="#f71bf0" strokeWidth="7" />
    <text x="1333" y="604" fontSize="23" fill="#e926e6" fontFamily="Noto Sans CJK SC, sans-serif">不是这个红色圆弧</text>
  </svg>
);

const StatusCell = ({ w, text }: { w: string; text?: string }) => (
  <div className={`${w} h-full flex items-center pl-[5px] border-l border-[#d2d2d2] text-[15px] text-[#666] whitespace-nowrap`}>{text}</div>
);

export default function App() {
  return (
    <div className="relative h-screen w-full flex flex-col overflow-hidden bg-white text-black font-['Noto_Sans','Noto_Sans_CJK_SC',sans-serif]">
      {/* title bar */}
      <div className="h-[29px] shrink-0 flex items-center">
        <svg viewBox="0 0 20 20" className="w-[20px] h-[20px] ml-[2px] mt-[-1px] shrink-0">
          <rect width="20" height="20" rx="2" fill="#e4252b" />
          <path d="M10 3L18 17H2Z" fill="none" stroke="#fff" strokeWidth="1.4" />
          <path d="M11 6L8 12h3l-2 4" fill="none" stroke="#fff" strokeWidth="1.2" />
        </svg>
        <span className="ml-[5px] text-[15.55px] whitespace-nowrap">EPLAN Electric P8 2.9 SP1 - D:\PLC_File\eplanProgram\learnEplan - =work1+Power/1 (learnEplan)</span>
        <div className="flex-1" />
        <svg viewBox="0 0 14 14" className="w-[14px] h-[14px] mr-[44px]"><path d="M1 7h12" stroke="#111" strokeWidth="1.1" /></svg>
        <svg viewBox="0 0 14 14" className="w-[14px] h-[14px] mr-[45px]"><path d="M3.5 3V1h9.5v9.5h-2M1 3.5h9.5V13H1z" stroke="#111" fill="none" strokeWidth="1.1" /></svg>
        <svg viewBox="0 0 14 14" className="w-[14px] h-[14px] mr-[25px]"><path d="M1 1l12 12M13 1L1 13" stroke="#111" strokeWidth="1" /></svg>
      </div>
      <div className="absolute top-[-4px] left-[1333px] w-[355px] h-[4px] shadow-[0_2px_5px_3px_rgba(0,0,0,0.35)]" />

      {/* menu bar */}
      <div className="relative h-[28px] shrink-0 flex items-center pl-[17px] border-t border-[#f2f2f2] text-[15.4px]">
        <HGrip cls="left-[4px]" />
        {menus.map(([label, w]) => <span key={label} className={`${w} whitespace-nowrap`}>{label}</span>)}
      </div>

      {/* toolbars */}
      <div className="h-[29px] shrink-0 flex border-t-2 border-[#b4b4b4]">
        <div className="flex h-full w-[1800px] border-r border-[#b4b4b4]">
          {row1.map((g, i) => <Group key={i} {...g} />)}
        </div>
      </div>
      <div className="h-[29px] shrink-0 flex border-t-2 border-[#b4b4b4]">
        <div className="flex h-full w-[1247px] border-r border-[#c4c4c4]">
          {row2.map((g, i) => <Group key={i} {...g} />)}
        </div>
      </div>

      <div className="flex-1 flex min-h-0 border-t border-[#b4b4b4]">
        {/* left dock */}
        <div className="w-[322px] shrink-0 flex flex-col bg-[#f0f0f0] border-r border-[#c8c8c8]">
          <PanelHeader title="页 - learnEplan" h="h-[28px]" />
          <div className="h-[446px] shrink-0 flex flex-col px-[3px] border-r border-[#c8c8c8] text-[15px]">
            <div className="mt-[11px] h-[18px] leading-[18px]">筛选器: (<u>F</u>)</div>
            <div className="mt-[6px] flex items-start">
              <div className="w-[271px] h-[28px] flex items-center justify-between pl-[4px] pr-[5px] bg-[#e3e3e3] border border-[#adadad]">
                <span>- 未激活 -</span>
                <svg viewBox="0 0 12 8" className="w-[11px] h-[7px]"><path d="M1 1l5 5 5-5" fill="none" stroke="#666" /></svg>
              </div>
              <div className="ml-[12px] mt-[1px] w-[32px] h-[28px] flex items-center justify-center bg-[#e6e6e6] border border-[#adadad] leading-none">...</div>
            </div>
            <div className="mt-[12px] h-[18px] leading-[18px]">数值: (<u>V</u>)</div>
            <div className="mt-[7px] w-[315px] h-[29px] bg-[#f0f0f0] border-2 border-[#7f7f7f] outline outline-1 outline-[#fafafa]" />
            <div className="relative mt-[11px] w-[316px] h-[305px] bg-white border border-[#a3a3a3] overflow-hidden">
              <svg className="absolute left-0 top-0 w-[312px] h-[240px]" viewBox="0 0 312 240">
                <path d="M11.5 18v8M11.5 40v8M32.5 62v8M51.5 84v8M72 106v103M72 121h9M72 143h9M72 165h9M72 187h9M72 209h9" fill="none" stroke="#9a9a9a" strokeDasharray="1 1" />
              </svg>
              {tree.map((r) => (
                <div key={r.t} className={`relative h-[22px] flex items-center ${r.lv} ${r.bold ? 'font-bold' : ''}`}>
                  {r.kind !== 'page' && <Exp open={!!r.exp} />}
                  <div className={r.gap}><TreeIcon kind={r.kind} /></div>
                  <div className={`ml-[3px] flex-1 h-full flex items-center pl-[3px] mr-[1px] whitespace-nowrap ${r.sel ? 'bg-[#e1e1e1]' : ''}`}>{r.t}</div>
                </div>
              ))}
            </div>
          </div>
          {/* tabs */}
          <div className="h-[31px] shrink-0 flex bg-[#f7f7f7] border-t border-[#111] text-[15px]">
            <div className="ml-[3px] w-[30px] h-[29px] flex items-center justify-center bg-[#f0f0f0] border-x border-b border-[#111]">树</div>
            <div className="ml-[5px] w-[41px] h-[24px] mt-[3px] flex items-center text-[#a0a0a0] border-r border-[#c8c8c8]">列表</div>
          </div>
          <div className="h-[4px] shrink-0" />
          <PanelHeader title="图形预览" h="h-[29px]" />
          <div className="flex-1 min-h-0 px-[2px] pt-[3px] pb-[4px]">
            <div className="w-[316px] h-full bg-black border border-[#e8e8e8]" />
          </div>
        </div>

        {/* editor */}
        <div className="flex-1 min-w-0 flex flex-col pl-[5px] bg-[#f5f5f5]">
          <div className="h-[29px] relative flex bg-[#f5f5f5] shrink-0">
            <div className="ml-[13px] h-[28px] mt-[1px] w-[271px] flex items-center bg-[#b9d0ea] [clip-path:polygon(10px_0,100%_0,100%_100%,0_100%)] font-bold text-[14.6px] whitespace-nowrap">
              <span className="ml-[23px] w-[224px]">=work1+Power/1 (learnEplan)</span>
              <div className="w-[21px] h-[21px] bg-[#c4515a] text-white text-[11px] leading-[20px] text-center">x</div>
            </div>
            <svg viewBox="0 0 14 8" className="absolute right-[4px] top-[12px] w-[12px] h-[7px]"><path d="M0 0h14L7 8z" fill="#111" /></svg>
          </div>
          <div className="flex-1 min-h-0 pt-[2px] border-t border-l border-r-[2px] border-b-[3px] border-[#b9cde4] bg-white">
            <div className="ml-[3px] h-[851px] overflow-hidden"><Schematic /></div>
          </div>
        </div>

        {/* right toolbar */}
        <div className="w-[31px] shrink-0 flex flex-col items-center bg-white border-l border-[#c8c8c8] overflow-hidden pt-[2px]">
          <div className="w-[22px] h-[8px] shrink-0 border-t-2 border-dotted border-[#b5b5b5]" />
          {side.map((s, i) => {
            if (s === '|') return <div key={i} className="w-[20px] h-[8.4px] shrink-0 flex items-center"><div className="w-full h-[1px] bg-[#8c8c8c]" /></div>;
            if (s === '=') return <div key={i} className="w-[31px] h-[8.4px] shrink-0 border-t border-[#bdbdbd]"><div className="mx-[3px] mt-[3px] border-t-2 border-dotted border-[#b5b5b5]" /></div>;
            return <div key={i} className="h-[24px] w-[24px] shrink-0 flex items-center justify-center"><svg viewBox="0 0 20 20" className="w-[20px] h-[20px]">{icons[s]}</svg></div>;
          })}
        </div>
      </div>

      {/* status bar */}
      <div className="relative h-[26px] flex items-center bg-[#f0f0f0] border-t border-[#dcdcdc] text-[14.5px] shrink-0">
        <div className="w-[923px] h-full flex items-center pl-[6px] text-[#222]">
          <span className="w-[80px]">RX: 43.00</span>
          <span>RY: 15.00</span>
        </div>
        <StatusCell w="w-[486px]" text="旋转光标上的符号" />
        <StatusCell w="w-[219px]" text="打开: 4.00 mm" />
        <StatusCell w="w-[127px]" text="逻辑 1:1" />
        <StatusCell w="w-[82px]" />
        <StatusCell w="flex-1" />
        <svg viewBox="0 0 16 14" className="absolute left-[1842px] top-[10px] w-[18px] h-[14px]"><path d="M5 0h6v5h4l-7 6-7-6h4zM0 12h16v2H0z" fill="#48a880" /></svg>
        <span className="absolute left-[1807px] top-[-1px] text-[15.5px] text-[#8a8a8a]/90 whitespace-nowrap">CSDN @花崎泪</span>
      </div>
    </div>
  );
}
